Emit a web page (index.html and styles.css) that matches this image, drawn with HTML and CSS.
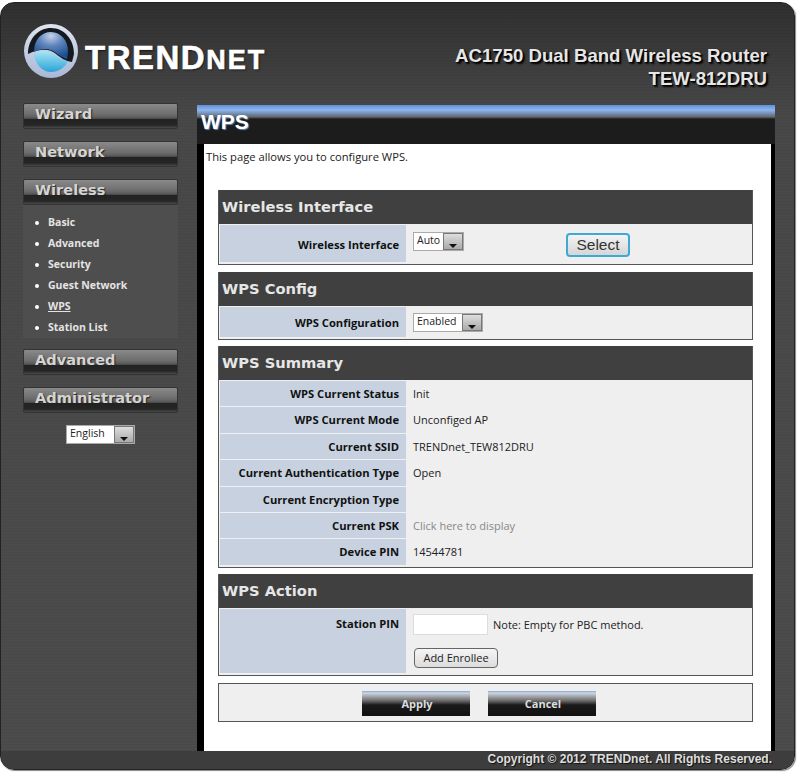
FILE: index.html
```html
<!DOCTYPE html>
<html>
<head>
    <title>TRENDnet | WPS</title>
    <link rel="stylesheet" href="styles.css">
</head>
<body>
<div class="shell">
    <div class="header">
        <div class="brand">
            <svg class="logo" width="56" height="56" viewBox="0 0 56 56">
                <defs>
                    <linearGradient id="ringGrad" x1="0" y1="0" x2="0" y2="1">
                        <stop offset="0" stop-color="#dfe4ef"/>
                        <stop offset="1" stop-color="#a9b8d6"/>
                    </linearGradient>
                    <radialGradient id="ballGrad" cx="0.5" cy="0.15" r="0.8">
                        <stop offset="0" stop-color="#c4d2ea"/>
                        <stop offset="0.45" stop-color="#5f86bd"/>
                        <stop offset="1" stop-color="#1d4f92"/>
                    </radialGradient>
                    <linearGradient id="waveGrad" x1="0" y1="0" x2="0" y2="1">
                        <stop offset="0" stop-color="#a8e4f6"/>
                        <stop offset="1" stop-color="#2aa4d8"/>
                    </linearGradient>
                </defs>
                <circle cx="28" cy="27" r="27" fill="url(#ringGrad)"/>
                <path d="M5 30C5 14 16 4 28 4C41 4 51 15 51 30L49 38C42 37 38 34 33 30C27 25 18 24 5 30Z" fill="#151a20"/>
                <path d="M11 28C11 16 18 8 28 8C38 8 45 17 45 27L44 35C40 34 37 32 33 29C27 24 19 24 11 28Z" fill="url(#ballGrad)"/>
                <path d="M11 30C18 26 26 26 32 31C37 35 41 37 45 37C42 44 35 48 28 48C19 48 12 40 11 30Z" fill="url(#waveGrad)"/>
            </svg>
            <span class="brand-name">TREND<span class="brand-small">net</span></span>
        </div>
        <div class="product">AC1750 Dual Band Wireless Router<br>TEW-812DRU</div>
    </div>

    <div class="columns">
        <div class="sidebar">
            <a class="nav-btn">Wizard</a>
            <a class="nav-btn">Network</a>
            <a class="nav-btn nav-open">Wireless</a>
            <ul class="subnav">
                <li>Basic</li>
                <li>Advanced</li>
                <li>Security</li>
                <li>Guest Network</li>
                <li class="current">WPS</li>
                <li>Station List</li>
            </ul>
            <a class="nav-btn">Advanced</a>
            <a class="nav-btn">Administrator</a>
            <div class="lang">
                <span class="fake-select"><span class="fake-value val-lang">English</span><span class="fake-arrow"></span></span>
            </div>
        </div>

        <div class="main">
            <div class="title-bar">WPS</div>
            <div class="content">
                <p class="intro">This page allows you to configure WPS.</p>

                <div class="section">
                    <h2>Wireless Interface</h2>
                    <div class="row row-iface">
                        <div class="label">Wireless Interface</div>
                        <div class="value">
                            <span class="fake-select"><span class="fake-value val-auto">Auto</span><span class="fake-arrow"></span></span>
                            <button class="select-btn">Select</button>
                        </div>
                    </div>
                </div>

                <div class="section section-tight">
                    <h2>WPS Config</h2>
                    <div class="row row-config">
                        <div class="label">WPS Configuration</div>
                        <div class="value">
                            <span class="fake-select"><span class="fake-value val-enabled">Enabled</span><span class="fake-arrow"></span></span>
                        </div>
                    </div>
                </div>

                <div class="section section-tight">
                    <h2>WPS Summary</h2>
                    <div class="row"><div class="label">WPS Current Status</div><div class="value">Init</div></div>
                    <div class="row"><div class="label">WPS Current Mode</div><div class="value">Unconfiged AP</div></div>
                    <div class="row"><div class="label">Current SSID</div><div class="value">TRENDnet_TEW812DRU</div></div>
                    <div class="row"><div class="label">Current Authentication Type</div><div class="value">Open</div></div>
                    <div class="row"><div class="label">Current Encryption Type</div><div class="value"></div></div>
                    <div class="row"><div class="label">Current PSK</div><div class="value muted">Click here to display</div></div>
                    <div class="row"><div class="label">Device PIN</div><div class="value">14544781</div></div>
                </div>

                <div class="section">
                    <h2>WPS Action</h2>
                    <div class="row row-action">
                        <div class="label">Station PIN</div>
                        <div class="value stacked">
                            <div class="pin-line"><input class="pin" type="text"><span>Note: Empty for PBC method.</span></div>
                            <button class="small-btn">Add Enrollee</button>
                        </div>
                    </div>
                </div>

                <div class="actions">
                    <button class="dark-btn">Apply</button>
                    <button class="dark-btn">Cancel</button>
                </div>
            </div>
        </div>
    </div>

    <div class="footer">Copyright © 2012 TRENDnet. All Rights Reserved.</div>
</div>
</body>
</html>
```

FILE: styles.css
```css
html, body {
    margin: 0;
    padding: 0;
    background: white;
}
body {
    font-family: "Open Sans", "Liberation Sans", sans-serif;
    font-size: 11px;
    color: #222;
    padding: 2px 2px 3px 0;
    height: 769px;
}
.shell {
    height: 768px;
    box-sizing: border-box;
    border-radius: 14px;
    border: 1px solid #222;
    background: repeating-linear-gradient(rgba(0,0,0,0.04) 0 1px, transparent 1px 3px), linear-gradient(#2f2f2f 0, #484848 110px, #4c4c4c 100%);
    box-shadow: 1px 1px 1px #888;
    display: flex;
    flex-direction: column;
    overflow: hidden;
}

/* header */
.header {
    height: 99px;
    flex: none;
    display: flex;
    justify-content: space-between;
    padding: 21px 27px 0 22px;
    box-sizing: border-box;
}
.brand {
    display: flex;
    align-items: flex-start;
}
.logo {
    flex: none;
}
.brand-name {
    font-family: "Liberation Sans", sans-serif;
    font-weight: bold;
    font-size: 33px;
    line-height: 36px;
    letter-spacing: 1.5px;
    color: white;
    margin: 16px 0 0 6px;
    -webkit-text-stroke: 0.6px white;
    text-shadow: 1px 1px 2px #111;
}
.brand-small {
    font-size: 27px;
    text-transform: uppercase;
    letter-spacing: 2px;
}
.product {
    font-family: "Liberation Sans", sans-serif;
    font-weight: bold;
    font-size: 18.6px;
    line-height: 23px;
    text-align: right;
    color: #e6e6e6;
    margin-top: 20px;
    text-shadow: 1px 1px 1px #000, 2px 2px 2px #000;
}

/* sidebar */
.columns {
    flex: 1;
    display: flex;
    min-height: 0;
}
.sidebar {
    width: 155px;
    flex: none;
    margin: 0 19px 0 22px;
    padding-top: 1px;
}
.nav-btn {
    display: block;
    height: 26px;
    box-sizing: border-box;
    margin-bottom: 12px;
    padding-left: 11px;
    font-family: "DejaVu Sans", sans-serif;
    font-weight: bold;
    font-size: 14.6px;
    line-height: 20px;
    color: #d4d4d4;
    border: 1px solid #333;
    border-radius: 2px;
    background: linear-gradient(#8a8a8a 0, #6c6c6c 45%, #555 60%, #232323 62%, #262626 88%, #4a4a4a 100%);
    text-shadow: 1px 1px 1px #222;
}
.nav-open {
    margin-bottom: 0;
}
.subnav {
    list-style: none;
    margin: 0 0 11px 0;
    padding: 7px 0 0 12px;
    height: 133px;
    box-sizing: border-box;
    background: #4e4e4e;
    color: #e4e4e4;
    font-weight: bold;
    font-size: 10.5px;
}
.subnav li {
    height: 21px;
    line-height: 21px;
    padding-left: 13px;
    position: relative;
}
.subnav li::before {
    content: "";
    position: absolute;
    left: 0;
    top: 9px;
    width: 4px;
    height: 4px;
    border-radius: 50%;
    background: white;
}
.subnav .current {
    text-decoration: underline;
}
.lang {
    text-align: center;
}

/* fake dropdowns */
.fake-select {
    display: inline-flex;
    height: 19px;
    box-sizing: border-box;
    border: 1px solid #aaa;
    background: white;
    vertical-align: top;
}
.fake-value {
    font-size: 10.5px;
    line-height: 15px;
    padding-left: 3px;
    box-sizing: border-box;
    color: #222;
    text-align: left;
}
.val-auto {
    width: 29px;
}
.val-enabled {
    width: 48px;
}
.val-lang {
    width: 47px;
}
.fake-arrow {
    width: 20px;
    background: linear-gradient(#ddd, #aaa);
    border: 1px solid #777;
    box-sizing: border-box;
    position: relative;
}
.fake-arrow::after {
    content: "";
    position: absolute;
    left: 5px;
    bottom: 1px;
    border: 4px solid transparent;
    border-top-color: #111;
    border-bottom: 0;
}

/* main area */
.main {
    width: 578px;
    flex: none;
    margin-top: 3px;
    display: flex;
    flex-direction: column;
}
.title-bar {
    height: 39px;
    flex: none;
    box-sizing: border-box;
    background: linear-gradient(#5f8fd6 0, #8fb7ee 5px, #6f89ac 9px, #666 12px, #1c1c1c 14px, #1c1c1c 100%);
    color: white;
    font-family: "Liberation Sans", sans-serif;
    font-weight: bold;
    font-size: 21px;
    line-height: 24px;
    padding: 5px 0 0 4px;
    text-shadow: 1px 1px 1px #6a86b0;
}
.content {
    flex: 1;
    background: white;
    border-left: 7px solid black;
    border-right: 4px solid black;
    padding: 0 18px 0 14px;
}
.intro {
    margin: 6px 0 26px -12px;
    font-size: 11.2px;
    line-height: 14px;
}
.section {
    margin-bottom: 7px;
    background: #efefef;
    border: 1px solid #555;
    border-top: 0;
    padding: 0 1px 1px;
}
.section-tight {
    margin-bottom: 6px;
}
.section h2 {
    margin: 0 -1px 1px;
    height: 34px;
    background: #404040;
    color: #e6e6e6;
    font-family: "DejaVu Sans", sans-serif;
    font-size: 14.7px;
    line-height: 34px;
    padding-left: 3px;
}
.row {
    display: flex;
    height: 26.4px;
}
.row-iface {
    height: 38px;
}
.row-iface .label {
    line-height: 39px;
}
.row-config {
    height: 31px;
}
.row-config .label {
    line-height: 31px;
}
.row-action {
    height: 65px;
}
.row-action .label {
    line-height: 30px;
}
.label {
    width: 186px;
    flex: none;
    box-sizing: border-box;
    background: #c7d1df;
    border-bottom: 1px solid #eef0f4;
    padding-right: 7px;
    text-align: right;
    font-weight: bold;
    font-size: 11.2px;
    line-height: 26px;
    color: #111;
}
.value {
    flex: 1;
    padding-left: 7px;
    line-height: 26px;
    font-size: 11px;
}
.row-iface .value, .row-config .value {
    display: flex;
    align-items: flex-start;
    padding-top: 7px;
}
.row-config .value {
    padding-top: 6px;
}
.muted {
    color: #888;
}
.select-btn {
    margin: 1px 0 0 102px;
    width: 64px;
    height: 24px;
    font-family: "Liberation Sans", sans-serif;
    font-size: 15.5px;
    color: #333;
    background: linear-gradient(#f4f4f4, #d6d6d6);
    border: 2px solid #3fa9d6;
    border-radius: 4px;
    padding: 0;
}
.stacked {
    padding-top: 5px;
    line-height: normal;
}
.pin-line {
    display: flex;
    align-items: center;
    gap: 5px;
}
.pin {
    width: 75px;
    height: 21px;
    box-sizing: border-box;
    border: 1px solid #ddd;
    background: white;
    padding: 0;
}
.small-btn {
    display: block;
    margin: 13px 0 0 1px;
    width: 84px;
    height: 20px;
    font-family: "Open Sans", sans-serif;
    font-size: 11px;
    color: #222;
    background: linear-gradient(#f6f6f6, #dcdcdc);
    border: 1px solid #666;
    border-radius: 4px;
    padding: 0;
}
.actions {
    height: 39px;
    box-sizing: border-box;
    background: #efefef;
    border: 1px solid #555;
    padding: 7px 14px 0 0;
    display: flex;
    justify-content: center;
    gap: 18px;
}
.dark-btn {
    width: 108px;
    height: 25px;
    border: 0;
    padding: 0 0 0 3px;
    font-family: "Open Sans", sans-serif;
    font-weight: bold;
    font-size: 11px;
    color: #ddd;
    background: linear-gradient(#7fa6dc 0, #cfd6de 2px, #666 10px, #1a1a1a 14px, #111 100%);
}

/* footer */
.footer {
    height: 18px;
    flex: none;
    background: #3d3d3d;
    color: #ddd;
    font-family: "Liberation Sans", sans-serif;
    font-weight: bold;
    font-size: 12px;
    line-height: 16px;
    text-align: right;
    padding-right: 22px;
    text-shadow: 1px 1px 1px #111;
}
```
